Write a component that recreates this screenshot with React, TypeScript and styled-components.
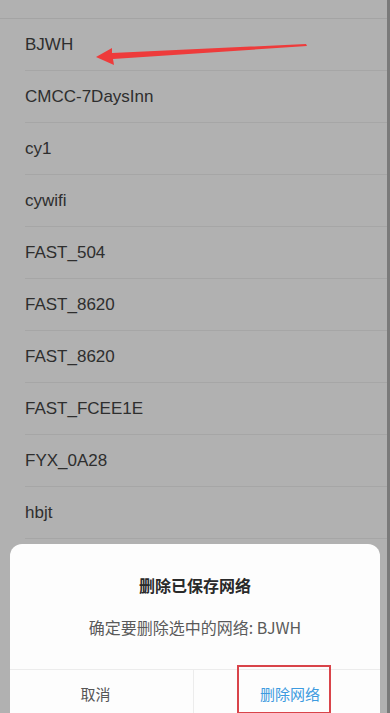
import React from 'react';
import styled, { createGlobalStyle } from 'styled-components';

const GlobalStyle = createGlobalStyle`
  html, body {
    margin: 0;
    padding: 0;
    background: #b1b1b1;
  }
  body {
    font-family: "Liberation Sans", Arial, "Noto Sans CJK SC", sans-serif;
  }
`;

const Screen = styled.div`
  position: relative;
  width: 390px;
  height: 713px;
  overflow: hidden;
  background: #b1b1b1;
`;

const EdgeShade = styled.div`
  position: absolute;
  top: 0;
  right: 0;
  bottom: 0;
  width: 3px;
  background: #7a7a7a;
`;

const TopStub = styled.div`
  height: 18px;
  border-bottom: 1px solid #a4a4a4;
`;

const List = styled.ul`
  list-style: none;
  margin: 0;
  padding: 0;
`;

const Row = styled.li`
  height: 51px;
  margin-left: 25px;
  display: flex;
  align-items: center;
  border-bottom: 1px solid #a6a6a6;
  font-size: 17px;
  color: #2e2e2e;
`;

const Arrow = styled.svg`
  position: absolute;
  left: 90px;
  top: 38px;
`;

const Dialog = styled.div`
  position: absolute;
  left: 10px;
  right: 10px;
  top: 544px;
  bottom: 0;
  background: #fdfdfd;
  border-radius: 12px 12px 0 0;
  display: flex;
  flex-direction: column;
`;

const Title = styled.div`
  margin-top: 29px;
  text-align: center;
  font-family: "Noto Sans CJK SC", sans-serif;
  font-size: 16px;
  font-weight: 700;
  color: #2a2a2a;
`;

const Message = styled.div`
  margin-top: 18px;
  text-align: center;
  font-family: "Noto Sans CJK SC", sans-serif;
  font-size: 16px;
  color: #5a5a5a;
`;

const Buttons = styled.div`
  margin-top: 30px;
  border-top: 1px solid #ececec;
  display: grid;
  grid-template-columns: 183px 1fr;
  flex: 1;
`;

const Btn = styled.div<{ $primary?: boolean }>`
  position: relative;
  display: flex;
  align-items: center;
  justify-content: center;
  padding-top: 4px;
  font-family: "Noto Sans CJK SC", sans-serif;
  font-size: 15px;
  color: ${(p) => (p.$primary ? '#3d9be0' : '#555555')};
  border-left: ${(p) => (p.$primary ? '1px solid #ececec' : 'none')};
  padding-left: ${(p) => (p.$primary ? '6px' : '0')};
  padding-right: ${(p) => (p.$primary ? '0' : '12px')};
`;

const Highlight = styled.div`
  position: absolute;
  left: 43px;
  top: -5px;
  width: 90px;
  height: 45px;
  border: 2px solid #d9444a;
`;

const networks = [
  'BJWH',
  'CMCC-7DaysInn',
  'cy1',
  'cywifi',
  'FAST_504',
  'FAST_8620',
  'FAST_8620',
  'FAST_FCEE1E',
  'FYX_0A28',
  'hbjt',
];

export default function App() {
  return (
    <Screen>
      <GlobalStyle />
      <TopStub />
      <List>
        {networks.map((n, i) => (
          <Row key={i}>{n}</Row>
        ))}
      </List>
      <Arrow width="222" height="28" viewBox="0 0 222 28">
        <path d="M6 19 L22 10 L22 15 L216 6 L217 8 L23 21 L24 27 Z" fill="#ee3b3b" />
      </Arrow>
      <Dialog>
        <Title>删除已保存网络</Title>
        <Message>确定要删除选中的网络: BJWH</Message>
        <Buttons>
          <Btn>取消</Btn>
          <Btn $primary>
            删除网络
            <Highlight />
          </Btn>
        </Buttons>
      </Dialog>
      <EdgeShade />
    </Screen>
  );
}
